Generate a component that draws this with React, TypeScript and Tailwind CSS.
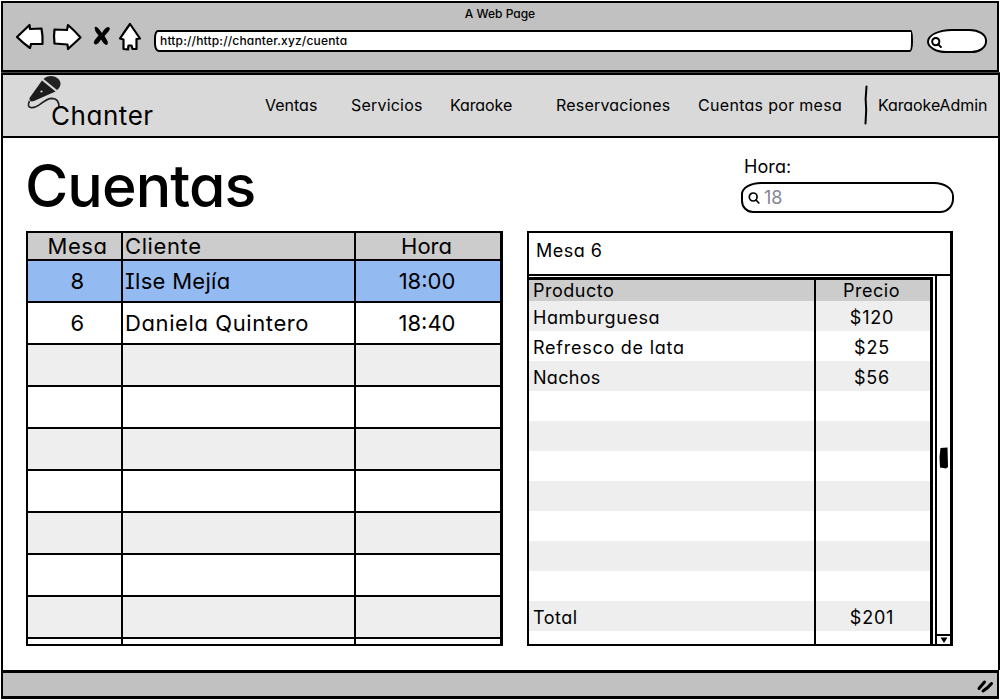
import React from "react";

const accounts = [
  { mesa: "8", cliente: "Ilse Mejía", hora: "18:00", bg: "bg-[#94baf2]", track: "tracking-[0.3px]" },
  { mesa: "6", cliente: "Daniela Quintero", hora: "18:40", bg: "bg-white", track: "tracking-[0.6px]" },
  { mesa: "", cliente: "", hora: "", bg: "bg-[#eeeeee]", track: "" },
  { mesa: "", cliente: "", hora: "", bg: "bg-white", track: "" },
  { mesa: "", cliente: "", hora: "", bg: "bg-[#eeeeee]", track: "" },
  { mesa: "", cliente: "", hora: "", bg: "bg-white", track: "" },
  { mesa: "", cliente: "", hora: "", bg: "bg-[#eeeeee]", track: "" },
  { mesa: "", cliente: "", hora: "", bg: "bg-white", track: "" },
  { mesa: "", cliente: "", hora: "", bg: "bg-[#eeeeee]", track: "" },
];

const products = [
  { name: "Hamburguesa", price: "$120", track: "tracking-[0.55px]" },
  { name: "Refresco de lata", price: "$25", track: "tracking-[0.75px]" },
  { name: "Nachos", price: "$56", track: "tracking-[0.3px]" },
  { name: "", price: "", track: "" },
  { name: "", price: "", track: "" },
  { name: "", price: "", track: "" },
  { name: "", price: "", track: "" },
  { name: "", price: "", track: "" },
  { name: "", price: "", track: "" },
  { name: "", price: "", track: "" },
  { name: "Total", price: "$201", track: "tracking-[0.5px]" },
];

function BrowserIcons() {
  return (
    <svg className="h-[32px] w-[128px]" viewBox="14 20 128 32" fill="#fff" stroke="#000" strokeWidth="2.2" strokeLinejoin="round" strokeLinecap="round">
      <path d="M17 37 L29.5 25 L30 29 L41.5 28.5 Q43 36 42.5 44 L31 44 L30 48 Q23 43 17 37Z" />
      <path d="M54.5 29.5 L67 30 L68 25 Q75 31 80.5 37.5 L68 49 L67.5 44.5 L54.5 43.5 Q53.5 36 54.5 29.5Z" />
      <g stroke="none" fill="#000">
        <path d="M94.5 27.5 Q96 25.5 98.5 28.5 L102 33 Q105 27.500 108 27 Q111.500 27.500 108.500 31.500 L104.500 36 L107.500 41 Q108.500 44.500 106.500 45 Q104 44.500 101 39.500 Q98 44.500 95.500 44.500 Q92 43.500 95.500 39 L98.500 35.500 L95.500 31.500Z" />
      </g>
      <path d="M130 24 L140 38.500 L136.500 39 L136.500 49 L132.500 49 L131.500 45.500 L128.500 45.500 L128 49.500 L123.500 49 L123.500 39.500 L120 38.500 Q125 31 130 24Z" />
    </svg>
  );
}

function Microphone() {
  return (
    <svg className="h-[36px] w-[38px]" viewBox="26 74 38 36" fill="none">
      <path d="M29.500 101 Q26.500 107 31.500 107.700 C40 108 43 98.500 52 98.300 Q59 98.500 59 107" stroke="#222" strokeWidth="1.700" />
      <path d="M42 80.500 L55.500 91.500 L34 101 Q29 102.500 29.500 98Z" fill="#1c1c1c" />
      <path d="M43.500 79 C47 75.500 54 74.500 58.500 79 C62 83 60.500 87.500 57 90Z" fill="#222" />
      <circle cx="41.500" cy="91.500" r="1.100" fill="#d9d9d9" />
    </svg>
  );
}

function SearchGlyph({ className }: { className: string }) {
  return (
    <svg className={className} viewBox="0 0 12 12" fill="none" stroke="#000" strokeLinecap="round">
      <ellipse cx="5.200" cy="5" rx="3.900" ry="4" />
      <path d="M8 8 L10.800 11" />
    </svg>
  );
}

function BrowserBar() {
  return (
    <header className="flex h-[67px] flex-col bg-[#c1c1c1]">
      <div className="flex h-[20px] items-center justify-center pt-px text-[12px] font-medium">A Web Page</div>
      <div className="flex pl-[11px]">
        <div className="-mt-[3px]"><BrowserIcons /></div>
        <div className="mt-[7px] ml-[12px] flex h-[22px] w-[759px] items-center rounded-[4px_2px_3px_5px/8px_10px_10px_8px] border-[2.5px] border-black bg-white pl-[4px] text-[12px] leading-none font-medium tracking-[0.17px]">
          <span className="-mt-px">http://http://chanter.xyz/cuenta</span>
        </div>
        <div className="mt-[6px] ml-[14px] flex h-[24px] w-[60px] items-center rounded-[26px_18px_16px_20px/13px_12px_12px_12px] border-2 border-black bg-white pl-[2px]">
          <SearchGlyph className="mt-[3px] size-[11px] stroke-[2.2]" />
        </div>
      </div>
    </header>
  );
}

function NavBar() {
  return (
    <nav className="flex h-[61px] items-center bg-[#d9d9d9] pb-px text-[16px] whitespace-nowrap">
      <div className="flex h-full w-[262px] items-start pl-[23px]">
        <div className="-mt-[1px] w-[26px]"><Microphone /></div>
        <span className="mt-[25px] -ml-px text-[26px] leading-[32px] tracking-[0.55px]">Chanter</span>
      </div>
      <span className="w-[86px]">Ventas</span>
      <span className="w-[99px] tracking-[0.2px]">Servicios</span>
      <span className="w-[106px] tracking-[-0.1px]">Karaoke</span>
      <span className="w-[142px] tracking-[0.2px]">Reservaciones</span>
      <span className="w-[165px] tracking-[0.3px]">Cuentas por mesa</span>
      <svg className="h-[40px] w-[6px]" viewBox="0 0 6 40" fill="none" stroke="#000" strokeWidth="2" strokeLinecap="round">
        <path d="M3.500 1.500 Q2 14 3.200 25 L2.500 38.500" />
      </svg>
      <span className="ml-[9px] tracking-[-0.1px]">KaraokeAdmin</span>
    </nav>
  );
}

function AccountsTable() {
  return (
    <section className="mt-[14px] flex h-[415px] w-[477px] flex-col overflow-hidden border-2 border-r-[3px] border-black bg-white text-[22px] leading-none">
      <div className="flex h-[28px] shrink-0 border-b-2 border-black bg-[#cccccc] tracking-[0.6px]">
        <div className="flex w-[95px] items-center justify-center border-r-2 border-black pl-[6px]">Mesa</div>
        <div className="flex w-[233px] items-center border-r-2 border-black pl-[2px]">Cliente</div>
        <div className="flex flex-1 items-center justify-center pr-[3px] tracking-[0px]">Hora</div>
      </div>
      {accounts.map((row, i) => (
        <div key={i} className={`flex h-[42px] shrink-0 border-b-2 border-black ${row.bg} ${row.track}`}>
          <div className="flex w-[95px] items-center justify-center border-r-2 border-black pl-[6px]">{row.mesa}</div>
          <div className="flex w-[233px] items-center border-r-2 border-black pl-[2px]">{row.cliente}</div>
          <div className="flex flex-1 items-center justify-center pr-[2px] tracking-normal">{row.hora}</div>
        </div>
      ))}
      <div className="flex flex-1">
        <div className="w-[95px] border-r-2 border-black" />
        <div className="w-[233px] border-r-2 border-black" />
      </div>
    </section>
  );
}

function Detail() {
  return (
    <section className="flex h-[415px] w-[426px] flex-col border-2 border-r-[3px] border-black bg-white text-[18px] leading-none tracking-[0.5px]">
      <div className="flex h-[43px] shrink-0 items-center border-b-2 border-black pb-[5px] pl-[7px]">Mesa 6</div>
      <div className="flex min-h-0 flex-1">
        <div className="mt-px flex flex-1 flex-col overflow-hidden border-t-[3px] border-r-[3px] border-black">
          <div className="flex h-[21px] shrink-0 bg-[#cccccc]">
            <div className="flex w-[287px] items-center border-r-2 border-black pt-px pl-[4px]">Producto</div>
            <div className="flex flex-1 items-center justify-center pt-px pr-[3px]">Precio</div>
          </div>
          {products.map((p, i) => (
            <div key={i} className={`flex h-[30px] shrink-0 ${i % 2 === 0 ? "bg-[#eeeeee]" : "bg-white"}`}>
              <div className={`flex w-[287px] items-center border-r-2 border-black pt-[3px] pl-[4px] ${p.track}`}>{p.name}</div>
              <div className="flex flex-1 items-center justify-center pt-[3px] pr-[2px] tracking-[0.8px]">{p.price}</div>
            </div>
          ))}
          <div className="w-[287px] flex-1 border-r-2 border-black" />
        </div>
        <div className="ml-[2px] flex w-[15px] flex-col items-center border-l-2 border-black">
          <svg className="mt-[171px] h-[22px] w-[10px]" viewBox="0 0 10 22">
            <path d="M1.500 1 L8.500 0.500 L9 20 L7 21.500 L1 20.500 L0.500 10Z" fill="#000" />
          </svg>
          <div className="mt-auto flex h-[10px] w-full items-end justify-center border-t-2 border-black">
            <svg className="h-[7px] w-[8px]" viewBox="0 0 8 7"><path d="M0.500 0.500 H7.500 L4 6Z" fill="#000" /></svg>
          </div>
        </div>
      </div>
    </section>
  );
}

export default function App() {
  return (
    <div className="flex h-[700px] w-[1001px] flex-col overflow-hidden bg-white pt-px pb-px pl-[1px] font-['Inter','Lato',sans-serif] text-black [font-feature-settings:'cv11','cv08']">
      <div className="w-[998px] border-x-2 border-t-2 border-black"><BrowserBar /></div>
      <div className="h-[2px] w-[998px] bg-black" />
      <div className="h-px w-[999px] bg-[#444]" />
      <div className="w-[999px] border-2 border-black"><NavBar /></div>
      <main className="flex h-[533px] w-[999px] justify-between border-x-2 border-black pr-[44px] pl-[23px]">
        <div>
          <h1 className="mt-[13px] -ml-px h-[66px] text-[59px] leading-[70px] font-medium tracking-[-0.9px]">Cuentas</h1>
          <AccountsTable />
        </div>
        <div>
          <div className="flex h-[93px] flex-col pl-[214px] text-[18px]">
            <label className="mt-[17px] ml-[3px] h-[27px] leading-[24px] tracking-[0.1px]">Hora:</label>
            <div className="flex h-[31px] w-[213px] items-center rounded-[20px_20px_14px_12px/12px_14px_14px_12px] border-2 border-black pl-[5px] text-[#858594]">
              <SearchGlyph className="size-[12px] stroke-[1.7]" />
              <span className="-mt-px ml-[4px]">18</span>
            </div>
          </div>
          <Detail />
        </div>
      </main>
      <footer className="flex h-[29px] w-[998px] shrink-0 items-center justify-end border-x-2 border-t-[3px] border-b-[3px] border-black bg-[#c1c1c1] pr-[3px]">
        <svg className="mt-[4px] h-[15px] w-[18px]" viewBox="0 0 18 15" fill="none" stroke="#000" strokeWidth="3" strokeLinecap="round">
          <path d="M3 9.500 Q6 6 8.500 3 M7 12 Q12 9 15.500 4.500" />
        </svg>
      </footer>
    </div>
  );
}
